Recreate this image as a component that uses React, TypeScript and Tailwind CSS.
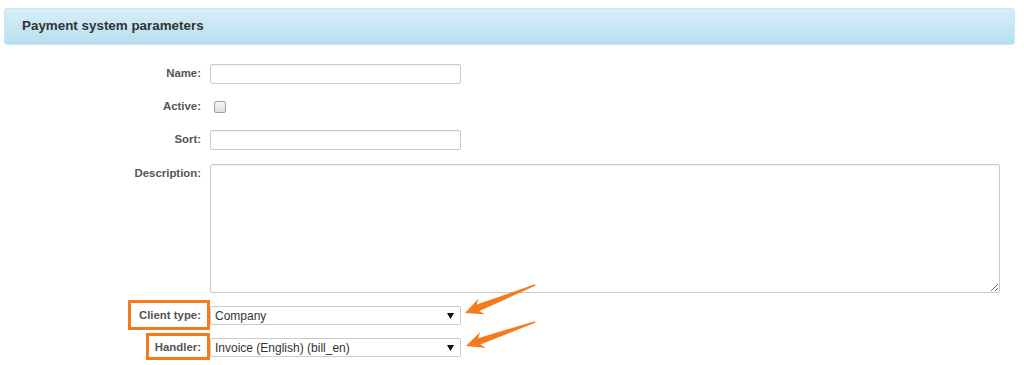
import type { ReactNode } from 'react';

type Pt = [number, number];

// tapered annotation arrow from tail to tip
const arrowPoints = (tail: Pt, tip: Pt) => {
  const dx = tip[0] - tail[0];
  const dy = tip[1] - tail[1];
  const len = Math.hypot(dx, dy);
  const d: Pt = [dx / len, dy / len];
  const n: Pt = [-d[1], d[0]];
  const at = (p: Pt, a: number, b: number): Pt => [p[0] + d[0] * a + n[0] * b, p[1] + d[1] * a + n[1] * b];
  const base = at(tip, -15, 0);
  const pts: Pt[] = [
    at(tail, 0, 0.8),
    at(base, 1, 3.4),
    at(base, -3, 8.5),
    tip,
    at(base, -3, -8.5),
    at(base, 1, -3.4),
    at(tail, 0, -0.8),
  ];
  return pts.map((p) => `${p[0].toFixed(1)},${p[1].toFixed(1)}`).join(' ');
};

const Row = ({ label, children, top = false }: { label: string; children: ReactNode; top?: boolean }) => (
  <div className={`flex gap-[9px] ${top ? 'items-start' : 'items-center'}`}>
    <label className={`w-[201px] shrink-0 text-right text-[11.4px] font-bold text-[#555] ${top ? 'pt-[1px]' : ''}`}>
      {label}
    </label>
    {children}
  </div>
);

const Input = () => (
  <input
    type="text"
    className="h-[20px] w-[251px] rounded-[2px] border border-[#cacaca] bg-white px-1 text-[12px] shadow-[inset_0_1px_1px_rgba(0,0,0,0.06)] outline-none"
  />
);

const Select = ({ value }: { value: string }) => (
  <div className="flex h-[19px] w-[251px] items-center justify-between rounded-[2px] border border-[#cacaca] bg-white pl-[4px] pr-[6px] text-[12px] text-[#333]">
    <span>{value}</span>
    <svg width="7" height="6" viewBox="0 0 7 6">
      <polygon points="0,0 7,0 3.5,6" fill="#111" />
    </svg>
  </div>
);

export default function App() {
  return (
    <div className="relative h-[365px] w-[1024px] overflow-hidden bg-white pt-[8px] font-['Liberation_Sans',Arial,sans-serif]">
      {/* Header */}
      <div className="ml-[4px] flex h-[37px] w-[1011px] items-center rounded-[3px] border border-[#cbe7f3] bg-gradient-to-b from-[#d8eef8] to-[#b6dff0] pl-[17px]">
        <h2 className="text-[13.4px] font-bold text-[#333]">Payment system parameters</h2>
      </div>

      {/* Form */}
      <div className="mt-[19px] flex flex-col gap-[13px]">
        <Row label="Name:">
          <Input />
        </Row>
        <Row label="Active:">
          <div className="flex h-[20px] items-center pl-[4px]">
            <span className="block h-[12px] w-[12px] rounded-[2px] border border-[#a0a0a0] bg-gradient-to-b from-[#f6f6f6] to-[#dedede]" />
          </div>
        </Row>
        <Row label="Sort:">
          <Input />
        </Row>
        <div className="mt-[1px]">
          <Row label="Description:" top>
            <textarea className="h-[129px] w-[790px] rounded-[2px] border border-[#cacaca] bg-white shadow-[inset_0_1px_1px_rgba(0,0,0,0.06)] outline-none" />
          </Row>
        </div>
        <div className="relative">
          <span className="absolute left-[128px] top-[-6px] h-[30px] w-[82px] border-[3px] border-[#f57a1c]" />
          <Row label="Client type:">
            <Select value="Company" />
          </Row>
        </div>
        <div className="relative">
          <span className="absolute left-[146px] top-[-5px] h-[27px] w-[64px] border-[3px] border-[#f57a1c]" />
          <Row label="Handler:">
            <Select value="Invoice (English) (bill_en)" />
          </Row>
        </div>
      </div>

      {/* Annotation arrows */}
      <svg className="pointer-events-none absolute left-0 top-0" width="1024" height="365">
        <polygon points={arrowPoints([535, 285], [465, 313])} fill="#f57a1c" />
        <polygon points={arrowPoints([535, 322], [466, 346])} fill="#f57a1c" />
      </svg>
    </div>
  );
}
